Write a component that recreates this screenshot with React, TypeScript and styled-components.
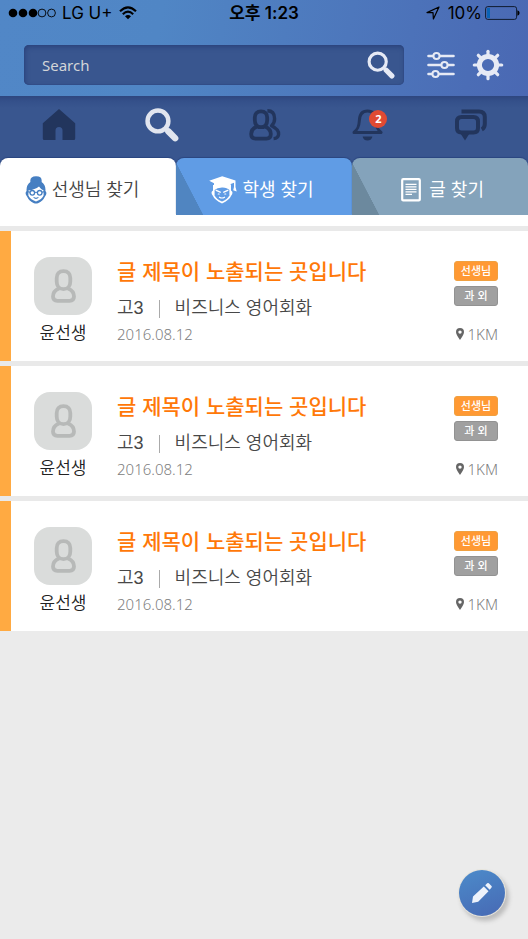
import React from "react";
import styled, { createGlobalStyle } from "styled-components";

const GlobalStyle = createGlobalStyle`
  *, *::before, *::after { box-sizing: border-box; }
  html, body { margin: 0; background: #ebebeb; }
  body { font-family: "Liberation Sans", "Noto Sans CJK KR", sans-serif; color: #333; }
  button, input { font: inherit; color: inherit; border: 0; background: none; padding: 0; margin: 0; }
  button { cursor: pointer; }
  ul { list-style: none; margin: 0; padding: 0; }
  svg { display: block; flex: none; }
`;

const Screen = styled.div`
  min-height: 100vh;
  display: flex;
  flex-direction: column;
`;

const Header = styled.header`
  background: linear-gradient(100deg, #5187c7 0%, #5086c5 30%, #4a68b3 100%);
`;

const StatusBar = styled.div`
  display: grid;
  grid-template-columns: 1fr auto 1fr;
  align-items: center;
  height: 26px;
  padding: 0 8px;
  color: #000;
  font: 17px/24px Inter, "Noto Sans CJK KR", sans-serif;
`;

const StatusGroup = styled.div<{ $end?: boolean }>`
  display: flex;
  align-items: center;
  justify-content: ${(p) => (p.$end ? "flex-end" : "flex-start")};
  gap: ${(p) => (p.$end ? "3px" : "6px")};
`;

const Clock = styled.time`
  font-weight: 600;
`;

const SearchRow = styled.div`
  display: flex;
  align-items: center;
  gap: 17px;
  padding: 19px 24px 11px;
`;

const SearchForm = styled.form`
  flex: 1;
  min-width: 0;
  display: flex;
  align-items: center;
  height: 40px;
  margin-right: 6px;
  padding: 0 9px 0 18px;
  border-radius: 5px;
  background: #39568f;
  box-shadow: inset 1px 2px 5px #2a437d, inset 0 0 0 1px #35508a;
`;

const SearchInput = styled.input`
  flex: 1;
  min-width: 0;
  height: 40px;
  outline: none;
  font: 15px/20px "Noto Sans", sans-serif;
  &::placeholder { color: #d3d5d8; opacity: 1; }
`;

const IconButton = styled.button`
  display: flex;
  align-items: center;
  justify-content: center;
  color: #e6eaf5;
`;

const NavBar = styled.nav`
  display: grid;
  grid-template-columns: repeat(5, 1fr);
  height: 62px;
  padding: 0 6px 4px 8px;
  background: linear-gradient(#2e467f 0, #34508a 5px, #39568f 12px);
`;

const NavLink = styled.a<{ $active?: boolean }>`
  display: flex;
  align-items: center;
  justify-content: center;
  color: ${(p) => (p.$active ? "#e1e5ef" : "#22355d")};
`;

const IconWrap = styled.span`
  position: relative;
  display: block;
`;

const Count = styled.span`
  position: absolute;
  top: 1px;
  right: -4px;
  width: 18px;
  height: 18px;
  border-radius: 50%;
  background: #e04a33;
  color: #fff;
  font: 700 11px/18px "Noto Sans", sans-serif;
  text-align: center;
`;

const Tabs = styled.div`
  display: grid;
  grid-template-columns: repeat(3, 1fr);
  background: #39568f;
`;

const Tab = styled.button<{ $bg: string; $fold?: string; $color: string; $gap: number }>`
  display: flex;
  align-items: center;
  justify-content: flex-start;
  gap: ${(p) => p.$gap}px;
  height: 57px;
  padding-top: 7px;
  padding-left: ${(p) => (p.$fold ? "19%" : "14%")};
  overflow: hidden;
  border-radius: 8px 8px 0 0;
  color: ${(p) => p.$color};
  background: ${(p) =>
    p.$fold
      ? `linear-gradient(to top right, ${p.$fold} 50%, transparent 51%) left bottom / 27px 52px no-repeat, ${p.$bg}`
      : p.$bg};
  box-shadow: 0 -1px 1px #2b4680;
  font-size: 18px;
  line-height: 26px;
  font-weight: ${(p) => (p.$fold ? 400 : 350)};
`;

const WideTab = styled(Tab)`
  padding-left: 28%;
`;

const Results = styled.ul`
  display: grid;
  gap: 5px;
  border-top: 11px solid #fff;
  padding-top: 5px;
  background: #e9e9e9;
`;

const Card = styled.li`
  display: flex;
  align-items: flex-start;
  height: 130px;
  padding: 26px 30px 0 23px;
  border-left: 11px solid #ffaa42;
  background: #fff;
`;

const Person = styled.div`
  display: flex;
  flex-direction: column;
  align-items: center;
  width: 58px;
  margin-right: 25px;
`;

const Avatar = styled.div`
  display: flex;
  align-items: center;
  justify-content: center;
  width: 58px;
  height: 58px;
  border-radius: 16px;
  background: #dadcdb;
`;

const Name = styled.span`
  margin-top: 7px;
  color: #222;
  font-size: 17px;
  line-height: 24px;
  font-weight: 350;
`;

const Details = styled.div`
  flex: 1;
  min-width: 0;
`;

const Title = styled.h2`
  margin: 0 0 8px;
  color: #ff7808;
  font-size: 21px;
  line-height: 30px;
  font-weight: 500;
`;

const Subject = styled.p`
  display: flex;
  align-items: center;
  gap: 15px;
  margin: 0;
  color: #484848;
  font-size: 18px;
  line-height: 27px;
  font-weight: 350;
`;

const Divider = styled.span`
  width: 1px;
  height: 18px;
  background: #aaa;
`;

const PostDate = styled.time`
  display: block;
  color: #808080;
  font: 300 15px/24px "Noto Sans", sans-serif;
`;

const Side = styled.div`
  display: flex;
  flex-direction: column;
  align-items: stretch;
  gap: 5px;
  width: 44px;
  padding-top: 4px;
`;

const Tag = styled.span<{ $bg: string; $edge: string }>`
  height: 20px;
  border: 1px solid ${(p) => p.$edge};
  border-radius: 3px;
  background: ${(p) => p.$bg};
  color: #fff;
  font-size: 11px;
  line-height: 18px;
  font-weight: 500;
  text-align: center;
`;

const Distance = styled.span`
  display: flex;
  align-items: center;
  justify-content: flex-end;
  gap: 4px;
  margin-top: 13px;
  color: #808080;
  font: 300 15px/20px "Noto Sans", sans-serif;
`;

const ComposeButton = styled.button`
  position: fixed;
  right: 23px;
  bottom: 23px;
  width: 46px;
  height: 46px;
  display: flex;
  align-items: center;
  justify-content: center;
  border-radius: 50%;
  background: linear-gradient(160deg, #4c8bca, #4769b4);
  box-shadow: 0 0 0 1px #e6e4dc, 3px 4px 4px 1px #bdbdbd;
`;

const SignalDots = () => (
  <svg width="48" height="10" viewBox="0 0 48 10" aria-hidden="true">
    {[5, 15, 25].map((x) => <circle key={x} cx={x} cy="5" r="4.3" />)}
    {[34, 43.5].map((x) => <circle key={x} cx={x} cy="5" r="3.9" fill="none" stroke="#000" strokeWidth=".9" />)}
  </svg>
);

const WifiIcon = () => (
  <svg width="18" height="14" viewBox="0 0 18 14" fill="none" stroke="#000" strokeWidth="2.1" aria-hidden="true">
    <path d="M1 5.2Q9-2.6 17 5.2M3.8 8.2Q9 3.2 14.2 8.2" />
    <path d="M9 13.2 6 10.2Q9 7.8 12 10.2Z" fill="#000" stroke="none" />
  </svg>
);

const LocationIcon = () => (
  <svg width="14" height="14" viewBox="0 0 14 14" fill="none" stroke="#000" strokeWidth="1.2" strokeLinejoin="round" aria-hidden="true">
    <path d="M13 1 1 6.6h6L7.4 13Z" />
  </svg>
);

const BatteryIcon = () => (
  <svg width="35" height="14" viewBox="0 0 35 14" aria-hidden="true">
    <rect x=".6" y=".6" width="31" height="12.8" rx="2.2" fill="none" stroke="#101c30" />
    <rect x="2" y="2" width="3" height="10" fill="#0a63b5" />
    <path d="M32.4 4.3q2.2.4 2.2 2.7t-2.2 2.7Z" />
  </svg>
);

const SearchIcon = ({ size, ring }: { size: number; ring: number }) => (
  <svg width={size} height={size} viewBox="0 0 32 32" fill="none" stroke="currentColor" aria-hidden="true">
    <circle cx="12.2" cy="12.2" r="9.8" strokeWidth={ring} />
    <path d="m19.8 19.8 1.4 1.4" strokeWidth="3.5" />
    <path d="m22 22 6.4 6.4" strokeWidth="6" strokeLinecap="round" />
  </svg>
);

const SlidersIcon = () => (
  <svg width="28" height="28" viewBox="0 0 28 28" fill="none" stroke="currentColor" strokeWidth="2.6" strokeLinecap="round" aria-hidden="true">
    <path d="M1.5 5H6M13 5h13.5M1.5 14H14M21 14h5.5M1.5 23H5M12 23h14.5" />
    <circle cx="9.5" cy="5" r="3.1" strokeWidth="2" />
    <circle cx="17.5" cy="14" r="3.1" strokeWidth="2" />
    <circle cx="8.5" cy="23" r="3.1" strokeWidth="2" />
  </svg>
);

const GearIcon = () => (
  <svg width="32" height="32" viewBox="0 0 32 32" fill="none" stroke="currentColor" aria-hidden="true">
    <circle cx="16" cy="16" r="8.6" strokeWidth="5" />
    {[0, 45, 90, 135, 180, 225, 270, 315].map((a) => (
      <path key={a} d="M16 5.5V2.3" strokeWidth="3.2" strokeLinecap="round" transform={`rotate(${a} 16 16)`} />
    ))}
  </svg>
);

const HomeIcon = () => (
  <svg width="34" height="32" viewBox="0 0 34 32" fill="currentColor" aria-hidden="true">
    <path d="M17 0 .8 14.2V29.5q0 1.5 1.5 1.5H13.5V21.5a3.5 3.5 0 0 1 7 0V31H31.7q1.5 0 1.5-1.5V14.2Z" />
  </svg>
);

const PeopleIcon = () => (
  <svg width="32" height="32" viewBox="0 0 32 32" fill="none" stroke="currentColor" strokeWidth="3.8" strokeLinejoin="round" aria-hidden="true">
    <path d="M12 2.4C8 2.4 5.8 4.9 5.8 8.6V11C5.8 15.2 8 18.2 12 18.2S18.2 15.2 18.2 11V8.6C18.2 4.9 16 2.4 12 2.4Z" />
    <path d="M8 17.4C4.3 19 2.2 21.6 2.2 25 2.2 27.8 3.8 29.6 6.6 29.6H17.4C20.2 29.6 21.8 27.8 21.8 25 21.8 21.6 19.7 19 16 17.4" />
    <path d="M18.4 1.8C23.4 1.8 25.6 5 25.6 9.8 25.6 13 24.6 15 22.6 16.8 27 19 30 21.4 29.6 25.4 29.3 28 27.4 29.4 24.6 29.6" strokeWidth="3.4" />
  </svg>
);

const BellIcon = () => (
  <svg width="31" height="32" viewBox="0 0 31 32" fill="none" stroke="currentColor" strokeWidth="3" strokeLinejoin="round" aria-hidden="true">
    <path d="M2 23.5C6 20 7 17.5 7.3 12 7.5 5 10 2 15.5 2S23.5 5 23.7 12C24 17.5 25 20 29 23.5Z" />
    <path d="M10.7 27.5h9.6a4.8 4 0 0 1-9.6 0Z" fill="currentColor" stroke="none" />
  </svg>
);

const ChatIcon = () => (
  <svg width="32" height="32" viewBox="0 0 32 32" fill="none" stroke="currentColor" aria-hidden="true">
    <path d="M6.5 2.4H24Q29.8 2.4 29.8 8v7Q29.8 19 26.8 20.6" strokeWidth="4" />
    <path d="M6.5 8H18.5Q23 8 23 12.5V19Q23 23.5 18.5 23.5H6.5Q2 23.5 2 19V12.5Q2 8 6.5 8Z" strokeWidth="4" />
    <path d="M5.5 24.5H14.5L10 31.5Z" fill="currentColor" stroke="none" />
  </svg>
);

const TeacherIcon = () => (
  <svg width="22" height="28" viewBox="0 0 22 28" aria-hidden="true">
    <path d="M5.4 6Q4.5.4 11 .3T16.6 6Q21 9 20.4 15Q22.6 17 20 20.5 18 25 13 27.2 11 28 9 27.2 4 25 2 20.5-.6 17 1.6 15 1 9 5.4 6Z" fill="#467fc2" />
    <path d="M3.4 14.4Q10 13.6 14 10.4 15.6 13 18.6 14.4V19.6Q17 23.4 11 25.6 5 23.4 3.4 19.6Z" fill="#fff" />
    <g fill="none" stroke="#467fc2">
      <circle cx="7.3" cy="16.8" r="2.3" strokeWidth="1.3" />
      <circle cx="14.7" cy="16.8" r="2.3" strokeWidth="1.3" />
      <path d="M9.6 16.6q1.4-.8 2.8 0M2.6 15.6l2.4.6M19.4 15.6l-2.4.6M8.6 21.4q2.4 1.9 4.8 0" strokeWidth="1.1" />
    </g>
  </svg>
);

const StudentIcon = () => (
  <svg width="28" height="28" viewBox="0 0 28 28" aria-hidden="true">
    <path d="M4 9H22V14.5Q25 16 22 20 20.5 24 13 27.4 5.5 24 4 20 1 16 4 14.5Z" fill="#fff" />
    <path d="M5.6 14Q8 11.6 13 11.4T20.4 14V19.2Q19 23 13 25.4 7 23 5.6 19.2Z" fill="#609ce5" />
    <g fill="none" stroke="#fff" strokeLinecap="round">
      <path d="M7.2 14.4 11.2 16.2M18.8 14.4 14.8 16.2" strokeWidth="1.4" />
      <path d="M9.2 18H10.2M15.8 18H16.8" strokeWidth="1.1" />
      <path d="M10.4 21.2Q13 22.8 15.6 21.2" strokeWidth="1.1" />
    </g>
    <path d="M.2 4.8 13.2.2 26.5 4.6V11l1.2 4.4-3.5-1.2.8-3.2V6.8L21.7 8v3Q13 7.8 5 11V7.3Z" fill="#fff" />
  </svg>
);

const ArticleIcon = () => (
  <svg width="20" height="24" viewBox="0 0 20 24" fill="none" stroke="#fff" aria-hidden="true">
    <rect x="1.2" y="1.2" width="17.6" height="21.2" rx="1" strokeWidth="2.2" />
    <path d="M4.5 6.3h11M4.5 8.8h11M4.5 11.3h11M4.5 13.8h11M4.5 16.3h6.5" strokeWidth="1.3" />
  </svg>
);

const AvatarIcon = () => (
  <svg width="27" height="36" viewBox="0 0 27 36" fill="none" stroke="#b7b9b8" strokeWidth="3.8" strokeLinejoin="round" aria-hidden="true">
    <path d="M13.5 3.2C9 3.2 6.7 6 6.7 10V13.4C6.7 18 9.2 21.2 13.5 21.2S20.3 18 20.3 13.4V10C20.3 6 18 3.2 13.5 3.2Z" />
    <path d="M9 20.4C5 22 3 25 3 28.6 3 31.2 4.6 32.8 7.4 32.8H19.6C22.4 32.8 24 31.2 24 28.6 24 25 22 22 18 20.4" />
  </svg>
);

const PinIcon = () => (
  <svg width="8" height="12" viewBox="0 0 8 12" fill="#666" aria-hidden="true">
    <path fillRule="evenodd" d="M4 0a4 4 0 0 1 4 4Q8 6.5 4 12 0 6.5 0 4A4 4 0 0 1 4 0Zm0 2.4a1.7 1.7 0 1 0 0 3.4 1.7 1.7 0 0 0 0-3.4Z" />
  </svg>
);

const PencilIcon = () => (
  <svg width="22" height="22" viewBox="0 0 22 22" fill="#edf2fb" aria-hidden="true">
    <path d="M1 21 2 14.5 12.8 4.5 17.5 9.2 7.2 19.8ZM14.2 3.3 16.2 1.3Q17 .6 17.8 1.3L20.5 4Q21.3 4.8 20.5 5.6L18.7 7.8Z" />
  </svg>
);

const posts = [1, 2, 3].map((id) => ({
  id,
  name: "윤선생",
  title: "글 제목이 노출되는 곳입니다",
  grade: "고3",
  subject: "비즈니스 영어회화",
  date: "2016.08.12",
  distance: "1KM",
}));

export default function App() {
  return (
    <Screen>
      <GlobalStyle />
      <Header>
        <StatusBar>
          <StatusGroup>
            <SignalDots />
            <span>LG U+</span>
            <WifiIcon />
          </StatusGroup>
          <Clock>오후 1:23</Clock>
          <StatusGroup $end>
            <LocationIcon />
            <span>&nbsp;10%</span>
            <BatteryIcon />
          </StatusGroup>
        </StatusBar>
        <SearchRow>
          <SearchForm role="search" onSubmit={(e) => e.preventDefault()}>
            <SearchInput type="text" placeholder="Search" aria-label="Search" />
            <IconButton type="submit" aria-label="검색"><SearchIcon size={28} ring={3.6} /></IconButton>
          </SearchForm>
          <IconButton type="button" aria-label="필터"><SlidersIcon /></IconButton>
          <IconButton type="button" aria-label="설정"><GearIcon /></IconButton>
        </SearchRow>
      </Header>
      <NavBar>
        <NavLink href="#home" aria-label="홈"><HomeIcon /></NavLink>
        <NavLink href="#search" aria-label="찾기" aria-current="page" $active><SearchIcon size={34} ring={4.2} /></NavLink>
        <NavLink href="#friends" aria-label="친구"><PeopleIcon /></NavLink>
        <NavLink href="#alerts" aria-label="알림"><IconWrap><BellIcon /><Count>2</Count></IconWrap></NavLink>
        <NavLink href="#chat" aria-label="대화"><ChatIcon /></NavLink>
      </NavBar>
      <Tabs role="tablist">
        <Tab type="button" role="tab" aria-selected="true" $bg="#fff" $color="#444" $gap={5}><TeacherIcon />선생님 찾기</Tab>
        <Tab type="button" role="tab" aria-selected="false" $bg="#609ce5" $fold="#5085c1" $color="#fff" $gap={5}><StudentIcon />학생 찾기</Tab>
        <WideTab type="button" role="tab" aria-selected="false" $bg="#84a3bb" $fold="#6c899e" $color="#fff" $gap={8}><ArticleIcon />글 찾기</WideTab>
      </Tabs>
      <Results>
        {posts.map((post) => (
          <Card key={post.id}>
            <Person>
              <Avatar><AvatarIcon /></Avatar>
              <Name>{post.name}</Name>
            </Person>
            <Details>
              <Title>{post.title}</Title>
              <Subject>{post.grade}<Divider />{post.subject}</Subject>
              <PostDate dateTime="2016-08-12">{post.date}</PostDate>
            </Details>
            <Side>
              <Tag $bg="#ff9933" $edge="#f0a040">선생님</Tag>
              <Tag $bg="#a0a0a0" $edge="#929292">과 외</Tag>
              <Distance><PinIcon />{post.distance}</Distance>
            </Side>
          </Card>
        ))}
      </Results>
      <ComposeButton type="button" aria-label="글쓰기"><PencilIcon /></ComposeButton>
    </Screen>
  );
}
